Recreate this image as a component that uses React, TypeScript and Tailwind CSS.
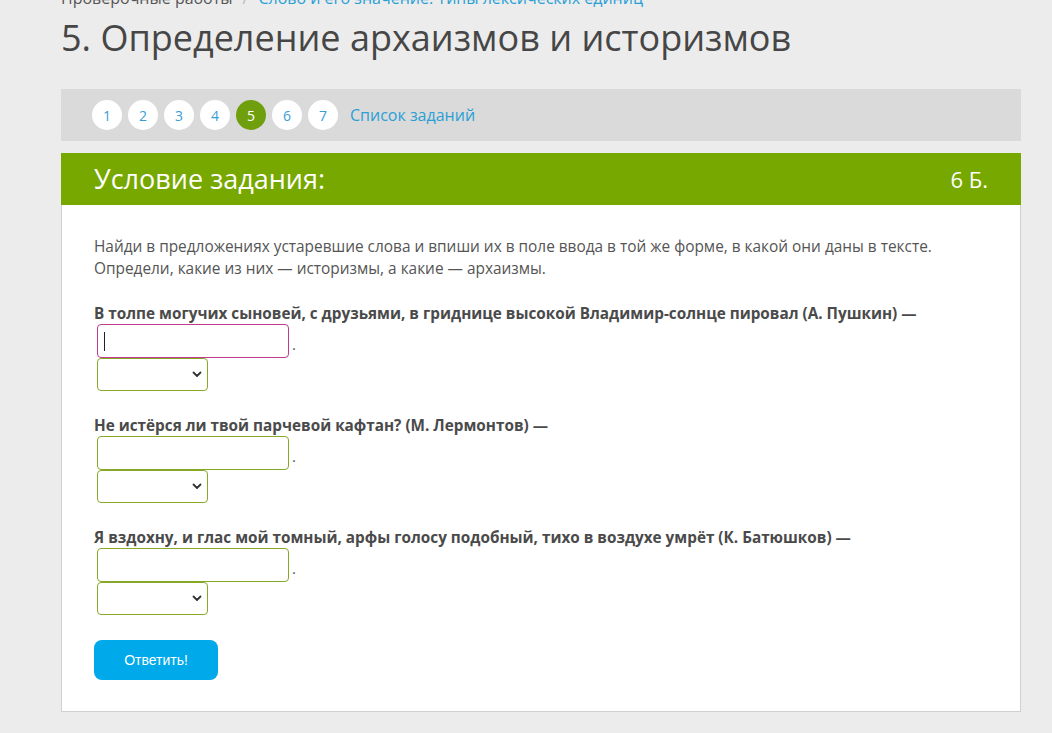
import React from "react";

const questions = [
  "В толпе могучих сыновей, с друзьями, в гриднице высокой Владимир-солнце пировал (А. Пушкин) —",
  "Не истёрся ли твой парчевой кафтан? (М. Лермонтов) —",
  "Я вздохну, и глас мой томный, арфы голосу подобный, тихо в воздухе умрёт (К. Батюшков) —",
];

function Chevron() {
  return (
    <svg width="10" height="7" viewBox="0 0 10 7" className="pointer-events-none absolute right-[6px] top-[13px]">
      <path d="M1.5 1.5 L5 5 L8.5 1.5" fill="none" stroke="#333" strokeWidth="1.8" strokeLinecap="round" strokeLinejoin="round" />
    </svg>
  );
}

function Answer({ focused }: { focused: boolean }) {
  return (
    <div className="ml-[3px]">
      <div className="flex items-end">
        <div className="relative">
          <input
            className={`block h-[34px] w-[192px] rounded-[4px] border bg-white outline-none ${
              focused ? "border-[#c23a8e]" : "border-[#86a92a]"
            }`}
          />
          {focused && <span className="absolute left-[7px] top-[8px] h-[19px] w-px bg-[#222]" />}
        </div>
        <span className="mb-[6px] ml-[3px] text-[15px] leading-none text-[#555]">.</span>
      </div>
      <div className="relative w-[111px]">
        <select className="block h-[33px] w-[111px] appearance-none rounded-[4px] border border-[#86a92a] bg-white outline-none" />
        <Chevron />
      </div>
    </div>
  );
}

export default function App() {
  return (
    <div className="min-h-screen overflow-hidden bg-[#ececec] pb-10 font-['Open_Sans',sans-serif]">
      <div className="ml-[61px] w-[960px]">
        <div className="-mt-[13px] h-[22px] text-[16px] leading-[22px]">
          <span className="text-[#555]">Проверочные работы</span>
          <span className="mx-[10px] text-[#bbb]">/</span>
          <span className="text-[#2a9fd6]">Слово и его значение. Типы лексических единиц</span>
        </div>
        <h1 className="mt-[5px] text-[36px] leading-[48px] font-normal text-[#464646]">
          5. Определение архаизмов и историзмов
        </h1>

        <div className="mt-[27px] flex h-[52px] items-center bg-[#dadada] pl-[31px]">
          <div className="flex gap-[6px]">
            {[1, 2, 3, 4, 5, 6, 7].map((n) => (
              <div
                key={n}
                className={`flex h-[30px] w-[30px] items-center justify-center rounded-full text-[14px] ${
                  n === 5 ? "bg-[#6f9f0c] text-white" : "bg-white text-[#3a9ed3]"
                }`}
              >
                {n}
              </div>
            ))}
          </div>
          <span className="ml-[12px] text-[16px] text-[#2a9fd6]">Список заданий</span>
        </div>

        <div className="mt-[12px] border border-[#d0d0d0] bg-white">
          <div className="-mx-px -mt-px flex h-[52px] items-center justify-between bg-[#76a800] px-[33px] text-white">
            <span className="text-[27px]">Условие задания:</span>
            <span className="text-[22px]">6 Б.</span>
          </div>
          <div className="px-[32px] pt-[31px] pb-[31px] text-[15.4px] leading-[22px] text-[#555]">
            <p>
              Найди в предложениях устаревшие слова и впиши их в поле ввода в той же форме, в какой они даны в тексте.
              <br />
              Определи, какие из них — историзмы, а какие — архаизмы.
            </p>
            {questions.map((q, i) => (
              <div key={i} className={i === 0 ? "mt-[22px]" : "mt-[23px]"}>
                <p className="text-[15.3px] font-bold text-[#4a4a4a]">{q}</p>
                <Answer focused={i === 0} />
              </div>
            ))}
            <button className="mt-[25px] h-[40px] w-[124px] rounded-[8px] bg-[#00a9ea] font-['Liberation_Sans',sans-serif] text-[14px] text-white">
              Ответить!
            </button>
          </div>
        </div>
      </div>
    </div>
  );
}
